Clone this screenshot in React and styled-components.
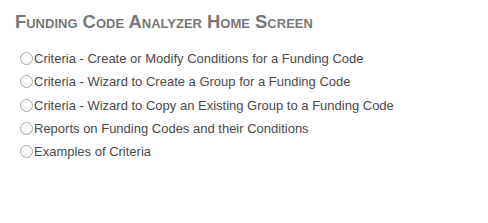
import React from 'react';
import styled, { createGlobalStyle } from 'styled-components';

const GlobalStyle = createGlobalStyle`
  html, body {
    margin: 0;
    padding: 0;
    background: #fff;
  }
  body {
    font-family: "Liberation Sans", Arial, Helvetica, sans-serif;
  }
`;

const Page = styled.div`
  padding: 11px 15px;
`;

const Title = styled.h1`
  margin: 0 0 14px 0;
  font-size: 18.4px;
  font-weight: bold;
  font-variant: small-caps;
  color: #777;
  line-height: 22px;
`;

const OptionList = styled.div`
  display: flex;
  flex-direction: column;
  padding-left: 5px;
`;

const Option = styled.label`
  display: flex;
  align-items: center;
  height: 23.3px;
  font-size: 13px;
  color: #4a4a4a;
  cursor: pointer;
`;

const Radio = styled.input.attrs({ type: 'radio', name: 'fca' })`
  appearance: none;
  margin: 0 1px 0 0;
  width: 13px;
  height: 13px;
  border: 1px solid #a8a8a8;
  border-radius: 50%;
  background: linear-gradient(#fff, #f4f4f4);
  box-sizing: border-box;
  flex-shrink: 0;
`;

const options = [
  'Criteria - Create or Modify Conditions for a Funding Code',
  'Criteria - Wizard to Create a Group for a Funding Code',
  'Criteria - Wizard to Copy an Existing Group to a Funding Code',
  'Reports on Funding Codes and their Conditions',
  'Examples of Criteria',
];

export default function App() {
  return (
    <Page>
      <GlobalStyle />
      <Title>Funding Code Analyzer Home Screen</Title>
      <OptionList>
        {options.map((o) => (
          <Option key={o}>
            <Radio />
            {o}
          </Option>
        ))}
      </OptionList>
    </Page>
  );
}
